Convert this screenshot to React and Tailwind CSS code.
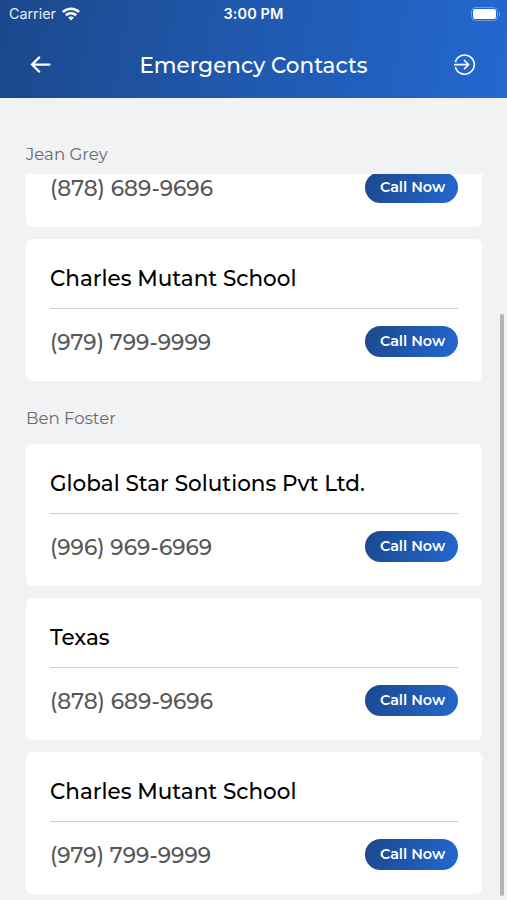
import React from "react";

const contacts = [
    { name: "Global Star Solutions Pvt Ltd.", phone: "(996) 969-6969" },
    { name: "Texas", phone: "(878) 689-9696" },
    { name: "Charles Mutant School", phone: "(979) 799-9999" },
];

const StatusBar = () => (
    <div className="flex h-7 items-center px-[9px] font-['Inter',sans-serif] text-white">
        <div className="flex flex-1 items-center gap-[6px]">
            <span className="text-[14.3px] leading-none text-white/90">Carrier</span>
            <svg width="18" height="14" viewBox="0 0 18 14" fill="none" stroke="currentColor" strokeWidth="2.5">
                <path d="M0.9 5C5.5 0.7 12.5 0.7 17.1 5" />
                <path d="M3.8 8.2C6.8 5.5 11.2 5.5 14.2 8.2" />
                <path d="M9 13.6L6.1 10.6C7.7 9.2 10.3 9.2 11.9 10.6Z" fill="currentColor" stroke="none" />
            </svg>
        </div>
        <span className="text-[14.5px] font-semibold leading-none tracking-[0.1px]">3:00 PM</span>
        <div className="flex flex-1 justify-end">
            <svg width="30" height="14" viewBox="0 0 30 14" className="-mr-[3px]">
                <rect x="0.5" y="0.5" width="26" height="13" rx="4" fill="none" stroke="#fff" strokeOpacity="0.35" />
                <rect x="2" y="2" width="23" height="10" rx="2.2" fill="#fff" />
                <path d="M28 4.7C29.4 5.3 29.4 8.7 28 9.3Z" fill="#fff" fillOpacity="0.4" />
            </svg>
        </div>
    </div>
);

const Header = () => (
    <header className="h-[98px] shrink-0 bg-linear-[100deg,#1b488c_0%,#1f56a8_40%,#2368d0_100%]">
        <StatusBar />
        <div className="flex h-[74px] items-center justify-between pl-[30px] pr-[31px] text-white">
            <svg width="21" height="18" viewBox="0 0 21 18" fill="none" stroke="currentColor" strokeWidth="2.2">
                <path d="M20.3 8.6H2M9.8 0.9L2 8.6L9.8 16.3" />
            </svg>
            <h1 className="whitespace-nowrap pl-[2px] pt-[2px] text-[21.5px] font-medium leading-none">Emergency Contacts</h1>
            <svg width="22" height="22" viewBox="0 0 22 22" fill="none" stroke="currentColor" strokeWidth="1.6">
                <path d="M1.4 8.1A9.6 9.6 0 1 1 1.4 13.1M0 10.6H14.3M10 6L14.6 10.6L10 15.2" />
            </svg>
        </div>
    </header>
);

const ContactCard = ({ name, phone }) => (
    <div className="h-[142px] shrink-0 rounded-md bg-white px-6">
        <div className="flex h-[70px] items-center border-b border-[#cfcfcf] pt-[11px]">
            {name && <h2 className="whitespace-nowrap text-[21.5px] font-medium leading-none text-black">{name}</h2>}
        </div>
        <div className="flex h-[65px] items-center justify-between">
            <span className="whitespace-nowrap pt-[2px] text-[21.6px] font-medium leading-none text-[#575757]">{phone}</span>
            <button className="flex h-[31px] w-[93px] items-center justify-center rounded-full bg-linear-[110deg,#1b488c,#2368d0] pl-[2px] text-[14.4px] font-semibold leading-none text-white">
                Call Now
            </button>
        </div>
    </div>
);

const App = () => {
    return (
        <div className="relative flex h-[900px] w-[507px] flex-col overflow-hidden bg-[#f0f2f4] font-['Montserrat','Inter',sans-serif]">
            <Header />
            <div className="flex h-[76px] shrink-0 items-center pl-[26px] pt-9">
                <p className="text-[16.6px] leading-none text-[#6b6b6b]">Jean Grey</p>
            </div>
            <main className="min-h-0 flex-1 overflow-hidden pl-[26px] pr-[25px]">
                {/* first card is scrolled under the section title */}
                <div className="-mt-[89px] flex flex-col gap-3">
                    <ContactCard phone="(878) 689-9696" />
                    <ContactCard name="Charles Mutant School" phone="(979) 799-9999" />
                </div>
                <div className="flex h-[63px] items-center pt-[11px]">
                    <p className="text-[16.6px] leading-none text-[#6b6b6b]">Ben Foster</p>
                </div>
                <div className="flex flex-col gap-3">
                    {contacts.map((contact) => (
                        <ContactCard key={contact.name} name={contact.name} phone={contact.phone} />
                    ))}
                </div>
            </main>
            {/* scroll indicator */}
            <div className="absolute right-[3px] top-[314px] h-[582px] w-1 rounded-full bg-[#b2b3b5]" />
        </div>
    );
};

export default App;
